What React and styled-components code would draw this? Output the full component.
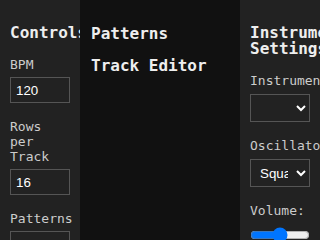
import styled, { createGlobalStyle } from "styled-components";

const GlobalStyle = createGlobalStyle`
  html, body {
    margin: 0;
    padding: 0;
    background: #111111;
    overflow: hidden;
  }
  * {
    box-sizing: border-box;
  }
`;

export const Layout = styled.div`
  display: flex;
  width: 100vw;
  height: 100vh;
  font-family: "DejaVu Sans Mono", monospace;
  color: #eeeeee;
`;

export const SidePanel = styled.aside`
  width: 80px;
  flex-shrink: 0;
  padding: 10px;
  background: #222222;
  overflow: hidden;
`;

export const PanelTitle = styled.h2`
  margin: 15px 0 16px;
  font-size: 16px;
  line-height: 16px;
  font-weight: bold;
  color: #eeeeee;
`;

export const Field = styled.div`
  margin-bottom: 16px;
`;

export const Label = styled.label`
  display: block;
  font-size: 13px;
  line-height: 15px;
  color: #cccccc;
  margin-bottom: ${({ $gap }) => $gap || 5}px;
`;

export const NumberInput = styled.input`
  display: block;
  width: 60px;
  height: 26px;
  padding: 5px;
  border: 1px solid #555555;
  background: #222222;
  color: #ffffff;
  font-family: "Liberation Sans", Arial, sans-serif;
  font-size: 13.33px;
  outline: none;
`;

export const Select = styled.select`
  display: block;
  width: 60px;
  height: 28px;
  padding: 0 5px;
  border: 1px solid #555555;
  border-radius: 0;
  background: #222222;
  color: #ffffff;
  color-scheme: dark;
  font-family: "Liberation Sans", Arial, sans-serif;
  font-size: 13.33px;
`;

export const Slider = styled.input`
  display: block;
  width: 60px;
  margin: 9px 0 0;
`;

export const Editor = styled.main`
  flex: 1;
  display: flex;
  flex-direction: column;
  gap: 13px;
  padding: 24px 11px;
  background: #111111;
  overflow: hidden;
`;

export const SectionTitle = styled.h3`
  margin: 0;
  font-size: 16px;
  line-height: 19px;
  font-weight: bold;
  color: #eeeeee;
  white-space: nowrap;
`;

export default function App() {
  return (
    <>
      <GlobalStyle />
      <Layout>
        <SidePanel>
          <PanelTitle>Controls</PanelTitle>
          <Field>
            <Label>BPM</Label>
            <NumberInput type="number" defaultValue={120} />
          </Field>
          <Field>
            <Label>Rows per Track</Label>
            <NumberInput type="number" defaultValue={16} />
          </Field>
          <Field>
            <Label>Patterns</Label>
            <NumberInput type="number" defaultValue={4} />
          </Field>
        </SidePanel>
        <Editor>
          <SectionTitle>Patterns</SectionTitle>
          <SectionTitle>Track Editor</SectionTitle>
        </Editor>
        <SidePanel>
          <PanelTitle>Instrument Settings</PanelTitle>
          <Field>
            <Label $gap={6}>Instrument</Label>
            <Select defaultValue="">
              <option value=""></option>
            </Select>
          </Field>
          <Field>
            <Label $gap={6}>Oscillator</Label>
            <Select defaultValue="square">
              <option value="square">Square</option>
              <option value="sine">Sine</option>
              <option value="sawtooth">Sawtooth</option>
              <option value="triangle">Triangle</option>
            </Select>
          </Field>
          <Field>
            <Label>Volume:</Label>
            <Slider type="range" min={0} max={100} defaultValue={50} />
          </Field>
        </SidePanel>
      </Layout>
    </>
  );
}
